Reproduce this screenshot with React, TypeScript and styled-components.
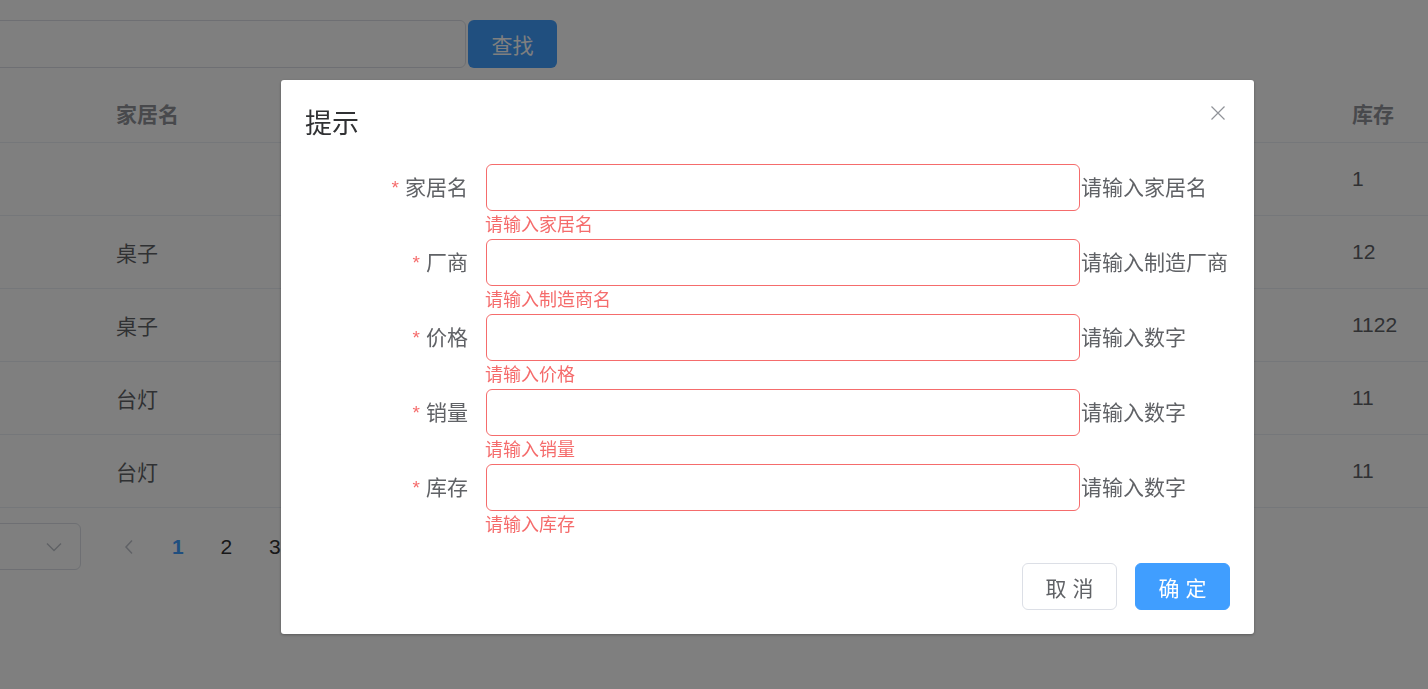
import styled, { createGlobalStyle } from "styled-components";

const GlobalStyle = createGlobalStyle`
  html, body {
    margin: 0;
    padding: 0;
    background: #fff;
    overflow: hidden;
  }
  body {
    font-family: "Liberation Sans", "Noto Sans CJK SC", sans-serif;
  }
  * {
    box-sizing: border-box;
  }
`;

const Page = styled.div`
  position: relative;
  width: 1428px;
  height: 689px;
  overflow: hidden;
`;

const Content = styled.div`
  width: 1720px;
  margin-left: -120px;
  padding-top: 20px;
`;

const SearchBar = styled.div`
  display: flex;
  gap: 2px;
  height: 48px;
`;

const SearchInput = styled.input`
  width: 586px;
  height: 48px;
  border: 1px solid #dcdfe6;
  border-radius: 6px;
  outline: none;
`;

const SearchButton = styled.button`
  width: 89px;
  height: 48px;
  border: none;
  border-radius: 6px;
  background: #409eff;
  color: #fff;
  font-family: inherit;
  font-size: 21px;
`;

const Table = styled.div`
  margin-top: 15px;
`;

const Row = styled.div<{ $head?: boolean }>`
  display: grid;
  grid-template-columns: 221px 309px 309px 309px 309px 263px;
  height: ${(p) => (p.$head ? 60 : 73)}px;
  border-bottom: 1px solid #ebeef5;
  color: ${(p) => (p.$head ? "#909399" : "#606266")};
  font-weight: ${(p) => (p.$head ? 700 : 400)};
  font-size: 21px;
`;

const Cell = styled.div`
  display: flex;
  align-items: center;
  padding: 0 15px;
`;

const Pager = styled.div`
  display: flex;
  align-items: center;
  margin-top: 15px;
  height: 47px;
`;

const SizeSelect = styled.div`
  display: flex;
  align-items: center;
  justify-content: flex-end;
  width: 201px;
  height: 47px;
  padding-right: 18px;
  border: 1px solid #dcdfe6;
  border-radius: 6px;
  margin-right: 24px;
`;

const PagerBtn = styled.div<{ $active?: boolean }>`
  display: flex;
  align-items: center;
  justify-content: center;
  width: 48.5px;
  height: 47px;
  font-size: 21px;
  font-weight: ${(p) => (p.$active ? 700 : 400)};
  color: ${(p) => (p.$active ? "#409eff" : "#303133")};
`;

const Overlay = styled.div`
  position: fixed;
  inset: 0;
  background: rgba(0, 0, 0, 0.5);
`;

const Dialog = styled.div`
  position: absolute;
  top: 80px;
  left: 281px;
  width: 973px;
  background: #fff;
  border-radius: 3px;
  box-shadow: 0 1px 3px rgba(0, 0, 0, 0.3);
`;

const DialogHeader = styled.div`
  padding: 25px 24px 0;
  height: 64px;
`;

const Title = styled.span`
  font-size: 27px;
  line-height: 39px;
  color: #303133;
`;

const CloseButton = styled.button`
  position: absolute;
  top: 25px;
  right: 28px;
  width: 16px;
  height: 16px;
  padding: 0;
  border: none;
  background: none;
  display: flex;
`;

const DialogBody = styled.div`
  padding: 20px 24px 0;
`;

const FormItem = styled.div`
  display: grid;
  grid-template-columns: 181px 594px auto;
`;

const Label = styled.label`
  text-align: right;
  padding-right: 18px;
  font-size: 21px;
  line-height: 47px;
  color: #606266;
`;

const Star = styled.span`
  color: #f56c6c;
  font-size: 19px;
  margin-right: 6px;
  vertical-align: 1px;
`;

const Field = styled.input`
  height: 47px;
  border: 1px solid #f56c6c;
  border-radius: 6px;
  outline: none;
`;

const Hint = styled.span`
  margin-left: 1px;
  font-size: 21px;
  line-height: 47px;
  color: #606266;
  white-space: nowrap;
`;

const ErrorText = styled.div`
  grid-column: 2;
  margin-left: -1px;
  font-size: 18px;
  line-height: 28px;
  color: #f56c6c;
`;

const DialogFooter = styled.div`
  display: flex;
  justify-content: flex-end;
  gap: 18px;
  padding: 24px 24px 24px;
`;

const Button = styled.button<{ $primary?: boolean }>`
  width: 95px;
  height: 47px;
  padding: 0;
  border-radius: 6px;
  border: 1px solid ${(p) => (p.$primary ? "#409eff" : "#dcdfe6")};
  background: ${(p) => (p.$primary ? "#409eff" : "#fff")};
  color: ${(p) => (p.$primary ? "#fff" : "#606266")};
  font-family: inherit;
  font-size: 21px;
  letter-spacing: 6px;
  text-indent: 6px;
`;

const rows = [
  { id: 1, name: "", maker: "", price: "", sales: "", stock: "1" },
  { id: 2, name: "桌子", maker: "家具厂", price: "100", sales: "10", stock: "12" },
  { id: 3, name: "桌子", maker: "家具厂", price: "120", sales: "8", stock: "1122" },
  { id: 4, name: "台灯", maker: "灯具厂", price: "50", sales: "20", stock: "11" },
  { id: 5, name: "台灯", maker: "灯具厂", price: "50", sales: "20", stock: "11" },
];

const fields = [
  { label: "家居名", hint: "请输入家居名", error: "请输入家居名" },
  { label: "厂商", hint: "请输入制造厂商", error: "请输入制造商名" },
  { label: "价格", hint: "请输入数字", error: "请输入价格" },
  { label: "销量", hint: "请输入数字", error: "请输入销量" },
  { label: "库存", hint: "请输入数字", error: "请输入库存" },
];

export default function App() {
  return (
    <Page>
      <GlobalStyle />
      <Content>
        <SearchBar>
          <SearchInput />
          <SearchButton>查找</SearchButton>
        </SearchBar>
        <Table>
          <Row $head>
            <Cell />
            <Cell>家居名</Cell>
            <Cell>厂商</Cell>
            <Cell>价格</Cell>
            <Cell>销量</Cell>
            <Cell>库存</Cell>
          </Row>
          {rows.map((r) => (
            <Row key={r.id}>
              <Cell />
              <Cell>{r.name}</Cell>
              <Cell>{r.maker}</Cell>
              <Cell>{r.price}</Cell>
              <Cell>{r.sales}</Cell>
              <Cell>{r.stock}</Cell>
            </Row>
          ))}
        </Table>
        <Pager>
          <SizeSelect>
            <svg width="16" height="10" viewBox="0 0 16 10">
              <path d="M1 1.5 L8 8.5 L15 1.5" fill="none" stroke="#c0c4cc" strokeWidth="1.5" />
            </svg>
          </SizeSelect>
          <PagerBtn>
            <svg width="10" height="16" viewBox="0 0 10 16">
              <path d="M8 1.5 L2 8 L8 14.5" fill="none" stroke="#c0c4cc" strokeWidth="1.5" />
            </svg>
          </PagerBtn>
          <PagerBtn $active>1</PagerBtn>
          <PagerBtn>2</PagerBtn>
          <PagerBtn>3</PagerBtn>
          <PagerBtn>4</PagerBtn>
        </Pager>
      </Content>

      <Overlay>
        <Dialog>
          <DialogHeader>
            <Title>提示</Title>
            <CloseButton aria-label="关闭">
              <svg width="16" height="16" viewBox="0 0 16 16">
                <path d="M1.5 1.5 L14.5 14.5 M14.5 1.5 L1.5 14.5" stroke="#909399" strokeWidth="1.2" />
              </svg>
            </CloseButton>
          </DialogHeader>
          <DialogBody>
            {fields.map((f) => (
              <FormItem key={f.label}>
                <Label>
                  <Star>*</Star>
                  {f.label}
                </Label>
                <Field />
                <Hint>{f.hint}</Hint>
                <ErrorText>{f.error}</ErrorText>
              </FormItem>
            ))}
          </DialogBody>
          <DialogFooter>
            <Button>取消</Button>
            <Button $primary>确定</Button>
          </DialogFooter>
        </Dialog>
      </Overlay>
    </Page>
  );
}
